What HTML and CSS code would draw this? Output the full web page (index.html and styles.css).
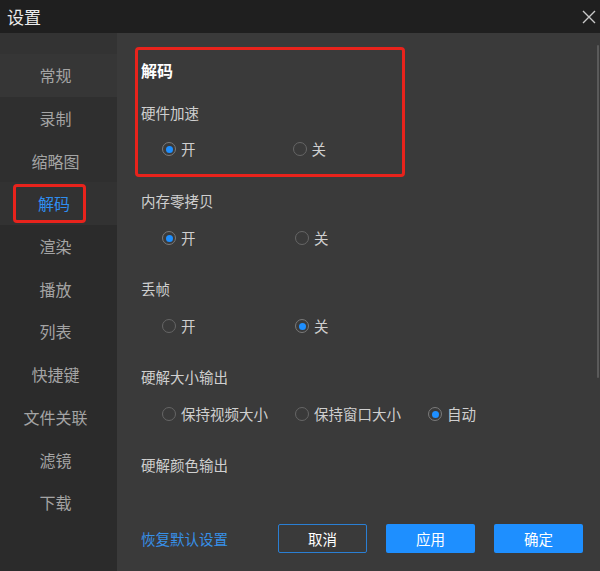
FILE: index.html
```html
<!DOCTYPE html>
<html lang="zh-CN">
<head>
    <meta charset="UTF-8">
    <title>设置</title>
    <link rel="stylesheet" href="styles.css">
</head>
<body>
    <div class="window">
        <div class="titlebar">
            <span class="title">设置</span>
            <svg class="close" width="16" height="16" viewBox="0 0 16 16">
                <path d="M2 2 L14 14 M14 2 L2 14" stroke="#c8c8c8" stroke-width="1.4" fill="none"/>
            </svg>
        </div>

        <div class="main">
            <div class="sidebar">
                <div class="side-top"></div>
                <div class="side-item hover">常规</div>
                <div class="side-item light">录制</div>
                <div class="side-item light">缩略图</div>
                <div class="side-item active"><span class="mark">解码</span></div>
                <div class="side-item">渲染</div>
                <div class="side-item">播放</div>
                <div class="side-item">列表</div>
                <div class="side-item">快捷键</div>
                <div class="side-item">文件关联</div>
                <div class="side-item">滤镜</div>
                <div class="side-item">下载</div>
            </div>

            <div class="content">
                <div class="scrollbar"></div>

                <div class="highlight">
                    <div class="section-title">解码</div>
                    <div class="group first">
                        <div class="label">硬件加速</div>
                        <div class="options">
                            <div class="radio checked"><i></i>开</div>
                            <div class="radio"><i></i>关</div>
                        </div>
                    </div>
                </div>

                <div class="group">
                    <div class="label">内存零拷贝</div>
                    <div class="options">
                        <div class="radio checked"><i></i>开</div>
                        <div class="radio"><i></i>关</div>
                    </div>
                </div>

                <div class="group">
                    <div class="label">丢帧</div>
                    <div class="options">
                        <div class="radio"><i></i>开</div>
                        <div class="radio checked"><i></i>关</div>
                    </div>
                </div>

                <div class="group">
                    <div class="label">硬解大小输出</div>
                    <div class="options">
                        <div class="radio"><i></i>保持视频大小</div>
                        <div class="radio"><i></i>保持窗口大小</div>
                        <div class="radio checked"><i></i>自动</div>
                    </div>
                </div>

                <div class="group">
                    <div class="label">硬解颜色输出</div>
                </div>

                <div class="footer">
                    <a class="reset">恢复默认设置</a>
                    <div class="buttons">
                        <button class="btn outline">取消</button>
                        <button class="btn">应用</button>
                        <button class="btn">确定</button>
                    </div>
                </div>
            </div>
        </div>
    </div>
</body>
</html>
```

FILE: styles.css
```css
body {
    margin: 0;
    padding: 0;
    font-family: "Noto Sans CJK SC", "Noto Sans", sans-serif;
    background: #3a3a3a;
}

.window {
    width: 600px;
    height: 571px;
    display: flex;
    flex-direction: column;
    overflow: hidden;
}

.titlebar {
    height: 33px;
    background: #1f1f1f;
    display: flex;
    align-items: center;
    justify-content: space-between;
    padding: 0 3px 0 7px;
    flex-shrink: 0;
}

.title {
    color: #ececec;
    font-size: 17px;
    line-height: 1;
}

.main {
    flex: 1;
    display: flex;
    min-height: 0;
}

.sidebar {
    width: 117px;
    background: #2b2b2b;
    display: flex;
    flex-direction: column;
    flex-shrink: 0;
}

.side-top {
    height: 21px;
    background: #333333;
}

.side-item {
    height: 42.7px;
    display: flex;
    align-items: center;
    justify-content: center;
    padding-right: 6px;
    color: #a4a4a4;
    font-size: 16px;
}

.side-item.hover {
    background: #363636;
}

.side-item.light {
    background: #2f2f2f;
}

.side-item.active {
    background: #323232;
    color: #2f8ef0;
}

.side-item .mark {
    border: 3px solid #e8231c;
    border-radius: 4px;
    padding: 6px 13px 6px 22px;
    margin-left: -12px;
    line-height: 21px;
}

.content {
    flex: 1;
    position: relative;
    display: flex;
    flex-direction: column;
    padding: 14px 17px 18px 24px;
    background: #3a3a3a;
}

.scrollbar {
    position: absolute;
    right: 1px;
    top: 12px;
    width: 2px;
    height: 333px;
    background: #5a5a5a;
    border-radius: 1px;
}

.highlight {
    width: 261px;
    margin-left: -6px;
    padding: 10px 0 15px 3px;
    border: 3px solid #e8231c;
    border-radius: 4px;
}

.section-title {
    color: #ffffff;
    font-size: 16px;
    font-weight: bold;
    line-height: 20px;
}

.group {
    padding-bottom: 31px;
}

.group.first {
    margin-top: 23px;
    padding-bottom: 0;
}

.highlight + .group {
    margin-top: 14px;
}

.label {
    color: #cfcfcf;
    font-size: 14.5px;
    line-height: 20px;
}

.options {
    display: flex;
    margin-top: 17px;
}

.group.first .options {
    margin-top: 16px;
}

.radio {
    width: 112px;
    padding-left: 21px;
    display: flex;
    align-items: center;
    gap: 5px;
    color: #cfcfcf;
    font-size: 14.5px;
    line-height: 20px;
}

.radio i {
    width: 12px;
    height: 12px;
    border: 1.5px solid #666666;
    border-radius: 50%;
    box-sizing: content-box;
    position: relative;
}

.radio.checked i {
    border-color: #7a7a7a;
}

.radio.checked i::after {
    content: "";
    position: absolute;
    left: 2.5px;
    top: 2.5px;
    width: 7px;
    height: 7px;
    border-radius: 50%;
    background: #1e8fff;
}

.footer {
    margin-top: auto;
    display: flex;
    align-items: center;
    justify-content: space-between;
}

.reset {
    color: #3790e8;
    font-size: 14.5px;
}

.buttons {
    display: flex;
    gap: 19px;
}

.btn {
    width: 89px;
    height: 29px;
    border: none;
    border-radius: 2px;
    background: #1e8fff;
    color: #ffffff;
    font-family: inherit;
    font-size: 14.5px;
}

.btn.outline {
    background: transparent;
    border: 1px solid #2a7fd4;
}
```
